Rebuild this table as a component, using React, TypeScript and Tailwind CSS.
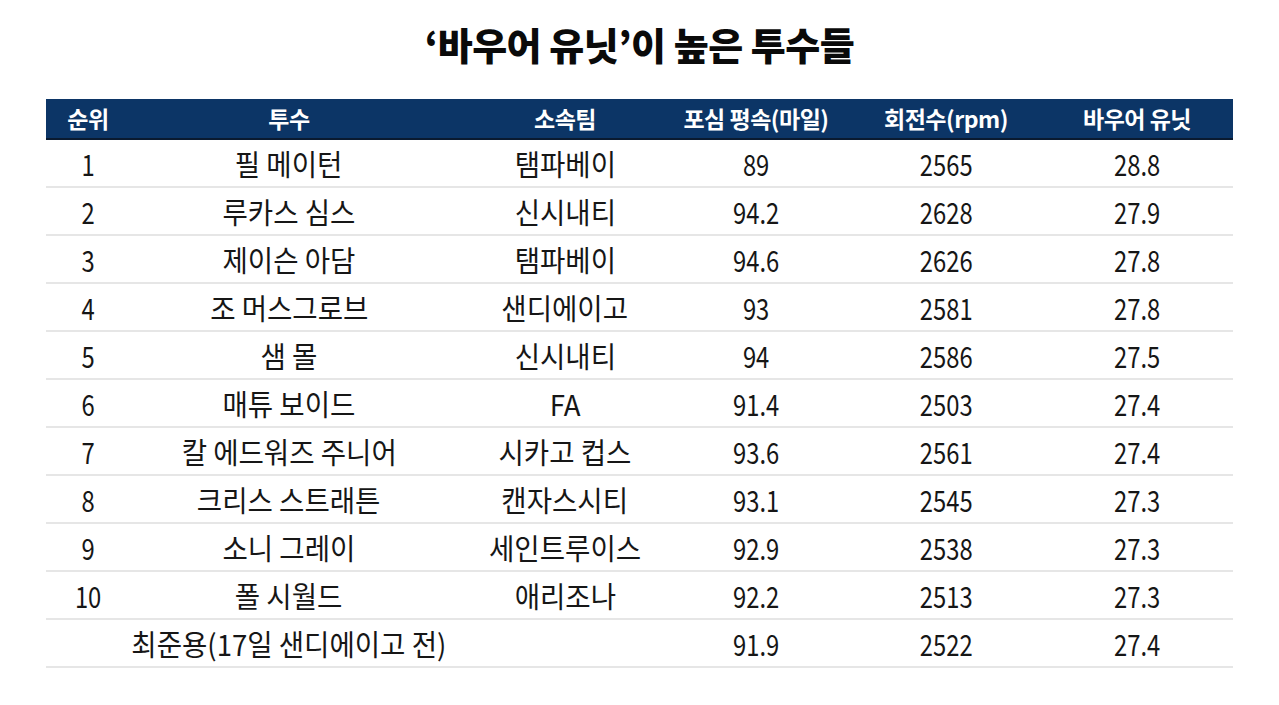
const rows: string[][] = [
  ['1', '필 메이턴', '탬파베이', '89', '2565', '28.8'],
  ['2', '루카스 심스', '신시내티', '94.2', '2628', '27.9'],
  ['3', '제이슨 아담', '탬파베이', '94.6', '2626', '27.8'],
  ['4', '조 머스그로브', '샌디에이고', '93', '2581', '27.8'],
  ['5', '샘 몰', '신시내티', '94', '2586', '27.5'],
  ['6', '매튜 보이드', 'FA', '91.4', '2503', '27.4'],
  ['7', '칼 에드워즈 주니어', '시카고 컵스', '93.6', '2561', '27.4'],
  ['8', '크리스 스트래튼', '캔자스시티', '93.1', '2545', '27.3'],
  ['9', '소니 그레이', '세인트루이스', '92.9', '2538', '27.3'],
  ['10', '폴 시월드', '애리조나', '92.2', '2513', '27.3'],
  ['', '최준용(17일 샌디에이고 전)', '', '91.9', '2522', '27.4'],
];

const headers = ['순위', '투수', '소속팀', '포심 평속(마일)', '회전수(rpm)', '바우어 유닛'];

const grid = 'grid grid-cols-[84px_318px_234px_148px_232px_150px_1fr]';

export default function App() {
  return (
    <div className="min-h-screen bg-white font-['Noto_Sans_CJK_KR',sans-serif] text-[#161616]">
      <h1 className="flex h-[93px] items-center justify-center pb-[6px] text-[38px] font-black tracking-[-0.5px] text-[#0a0a0a]">
        ‘바우어 유닛’이 높은 투수들
      </h1>
      <div className="mx-[46px]">
        <div className={`${grid} mt-[6px] h-[41px] items-center border-b-2 border-[#0a1a30] bg-[#0c3566] text-white`}>
          {headers.map((h, i) => (
            <div key={i} className="flex justify-center whitespace-nowrap">
              <span className="inline-block text-[23px] font-bold leading-none tracking-[-0.5px]">{h}</span>
            </div>
          ))}
          <div />
        </div>
        {rows.map((r, ri) => (
          <div key={ri} className={`${grid} h-[48px] items-center border-b-2 border-[#e6e6e6]`}>
            {r.map((c, ci) => (
              <div key={ci} className="flex justify-center whitespace-nowrap">
                {ci === 1 || ci === 2 ? (
                  <span className="inline-block scale-x-[0.95] text-[29px] leading-none">{c}</span>
                ) : (
                  <span className="inline-block scale-x-[0.82] text-[29px] leading-none">{c}</span>
                )}
              </div>
            ))}
            <div />
          </div>
        ))}
      </div>
    </div>
  );
}
